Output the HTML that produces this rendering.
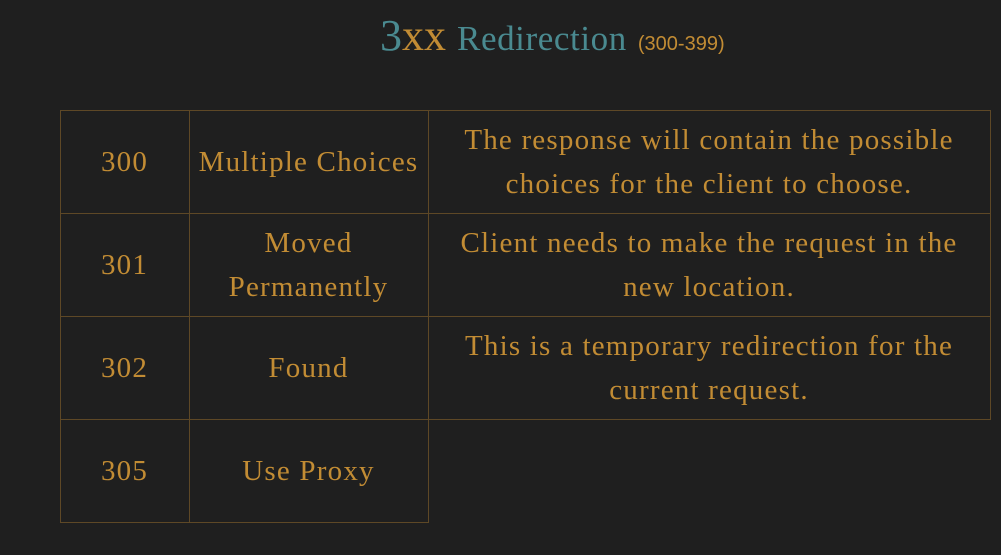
<!DOCTYPE html>
<html><head><style>
body{margin:0;width:1001px;height:555px;background:#1f1f1f;overflow:hidden;position:relative;font-family:"Liberation Serif",serif;color:#c28c34}
.t{position:absolute;top:10px;left:380px;white-space:nowrap}
.l{position:absolute;background:#5e4826}
.c{position:absolute;display:flex;align-items:center;justify-content:center;text-align:center;font-size:29px;line-height:44px;letter-spacing:1.2px;white-space:nowrap}
</style></head><body>
<div class="t"><span style="font-size:44px;color:#4a8a90">3</span><span style="font-size:44px;color:#c28c34">xx</span><span style="font-size:35px;color:#4a8a90;letter-spacing:0.6px;margin-left:11px">Redirection</span><span style="font-family:'Liberation Sans Narrow','Liberation Sans',sans-serif;font-size:20px;color:#c28c34;margin-left:11px">(300-399)</span></div>
<div class="l" style="left:60px;top:110px;width:930px;height:1px"></div>
<div class="l" style="left:60px;top:213px;width:930px;height:1px"></div>
<div class="l" style="left:60px;top:316px;width:930px;height:1px"></div>
<div class="l" style="left:60px;top:419px;width:930px;height:1px"></div>
<div class="l" style="left:60px;top:522px;width:368px;height:1px"></div>
<div class="l" style="left:60px;top:110px;width:1px;height:413px"></div>
<div class="l" style="left:189px;top:110px;width:1px;height:413px"></div>
<div class="l" style="left:428px;top:110px;width:1px;height:413px"></div>
<div class="l" style="left:990px;top:110px;width:1px;height:310px"></div>

<div class="c" style="left:60px;top:110px;width:129px;height:103px">300</div>
<div class="c" style="left:189px;top:110px;width:239px;height:103px">Multiple Choices</div>
<div class="c" style="left:428px;top:110px;width:562px;height:103px">The response will contain the possible<br>choices for the client to choose.</div>

<div class="c" style="left:60px;top:213px;width:129px;height:103px">301</div>
<div class="c" style="left:189px;top:213px;width:239px;height:103px">Moved<br>Permanently</div>
<div class="c" style="left:428px;top:213px;width:562px;height:103px">Client needs to make the request in the<br>new location.</div>

<div class="c" style="left:60px;top:316px;width:129px;height:103px">302</div>
<div class="c" style="left:189px;top:316px;width:239px;height:103px">Found</div>
<div class="c" style="left:428px;top:316px;width:562px;height:103px">This is a temporary redirection for the<br>current request.</div>

<div class="c" style="left:60px;top:419px;width:129px;height:103px">305</div>
<div class="c" style="left:189px;top:419px;width:239px;height:103px">Use Proxy</div>
</body></html>
